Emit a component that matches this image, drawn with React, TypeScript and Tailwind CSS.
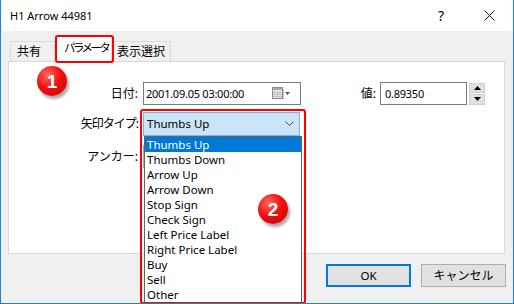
import React from "react";

const items = [
  "Thumbs Up",
  "Thumbs Down",
  "Arrow Up",
  "Arrow Down",
  "Stop Sign",
  "Check Sign",
  "Left Price Label",
  "Right Price Label",
  "Buy",
  "Sell",
  "Other",
];

function Badge({ n, cls }: { n: string; cls: string }) {
  return (
    <div
      className={`absolute w-[30px] h-[30px] rounded-full flex items-center justify-center text-white text-[19px] font-bold leading-none bg-[radial-gradient(circle_at_35%_30%,#ff6a5e_0%,#f01010_45%,#c80000_100%)] shadow-[2px_3px_3px_rgba(0,0,0,0.35)] font-['Liberation_Sans',sans-serif] ${cls}`}
    >
      {n}
    </div>
  );
}

export default function App() {
  return (
    <div className="relative w-[514px] h-[304px] overflow-hidden bg-[#f0f0f0] border-x border-b border-[#1883d7] flex flex-col text-[12px] text-black font-['Noto_Sans','Noto_Sans_CJK_JP',sans-serif]">
      {/* title bar */}
      <div className="h-[31px] shrink-0 bg-white flex items-center pl-[9px]">
        <span className="flex-1 text-[11px] leading-[14px]">H1 Arrow 44981</span>
        <span className="w-[46px] text-center text-[14px] leading-[14px] mr-[2px]">?</span>
        <span className="w-[46px] flex justify-center mr-[1px]">
          <svg width="11" height="11" viewBox="0 0 11 11">
            <path d="M0.5 0.5 L10.5 10.5 M10.5 0.5 L0.5 10.5" stroke="#111" strokeWidth="1" fill="none" />
          </svg>
        </span>
      </div>

      {/* body */}
      <div className="flex-1 flex flex-col pl-[7px] pr-[8px] pt-[5px]">
        {/* tabs */}
        <div className="h-[25px] flex items-end pl-[2px] relative z-10 whitespace-nowrap">
          <div className="w-[45px] h-[20px] border border-b-0 border-[#d9d9d9] bg-[#f0f0f0] flex items-center pl-[6px] leading-[14px]">
            共有
          </div>
          <div className="w-[57px] h-[26px] -mb-px border border-b-0 border-[#d9d9d9] bg-white flex items-center pl-[8px] pb-[3px] leading-[14px] text-[11.5px] tracking-[-2.6px]">
            パラメータ
          </div>
          <div className="w-[59px] h-[20px] border border-b-0 border-l-0 border-[#d9d9d9] bg-[#f0f0f0] flex items-center pl-[5px] leading-[14px]">
            表示選択
          </div>
        </div>

        {/* panel */}
        <div className="w-[497px] h-[193px] bg-white border border-[#d9d9d9] pt-[20px]">
          {/* row 1 */}
          <div className="flex items-center h-[23px]">
            <div className="w-[130px] text-right pr-[1px]">日付:</div>
            <div className="ml-[4px] w-[158px] h-[23px] border border-[#7a7a7a] flex items-center pl-[2px] pr-[8px]">
              <span className="flex-1 text-[11px] leading-[14px] tracking-[-0.25px]">2001.09.05 03:00:00</span>
              <svg width="20" height="13" viewBox="0 0 20 13">
                <rect x="0.5" y="0.5" width="10" height="11" fill="#f4f4f4" stroke="#8a8a8a" />
                <rect x="1" y="1" width="9" height="2" fill="#a8a8a8" />
                <path d="M3 3.5 V11 M5.5 3.5 V11 M8 3.5 V11 M1 5.5 H10 M1 7.5 H10 M1 9.5 H10" stroke="#b8b8b8" strokeWidth="0.8" />
                <path d="M11 12.5 H11.5 V2" stroke="#c8c8c8" fill="none" />
                <path d="M13 5 L18 5 L15.5 8 Z" fill="#4a5a7a" />
              </svg>
            </div>
            <div className="w-[75px] text-right">値:</div>
            <div className="ml-[4px] w-[87px] h-[23px] border border-[#7a7a7a] flex items-center pl-[4px] text-[11px] leading-[14px] tracking-[-0.25px]">
              0.89350
            </div>
            <div className="ml-[2px] w-[16px] h-[22px] flex flex-col gap-[1px]">
              <div className="h-[10px] bg-[#e1e1e1] border border-[#cfcfcf] flex items-center justify-center">
                <svg width="7" height="4" viewBox="0 0 7 4"><path d="M0 4 L3.5 0 L7 4 Z" fill="#000" /></svg>
              </div>
              <div className="h-[11px] bg-[#e1e1e1] border border-[#cfcfcf] flex items-center justify-center">
                <svg width="7" height="4" viewBox="0 0 7 4"><path d="M0 0 L7 0 L3.5 4 Z" fill="#000" /></svg>
              </div>
            </div>
          </div>

          {/* row 2 */}
          <div className="flex items-center h-[23px] mt-[7px]">
            <div className="w-[130px] text-right pr-[1px] tracking-[-1px]">矢印タイプ:</div>
            <div className="ml-[4px] w-[157px] h-[24px] bg-[#cce4f7] border border-[#7eb4ea] flex items-center pl-[3px] pr-[5px]">
              <span className="flex-1 text-[11.5px] leading-[14px]">Thumbs Up</span>
              <svg width="9" height="6" viewBox="0 0 9 6">
                <path d="M0.5 0.5 L4.5 4.5 L8.5 0.5" stroke="#444" fill="none" />
              </svg>
            </div>
          </div>

          {/* row 3 */}
          <div className="flex items-center h-[23px] mt-[10px]">
            <div className="w-[130px] text-right pr-[1px]">アンカー:</div>
            <div className="ml-[4px] w-[158px] h-[23px] border border-[#adadad] bg-[#e1e1e1]" />
          </div>
        </div>

        {/* buttons */}
        <div className="flex justify-end gap-[10px] mt-[10px]">
          <button className="w-[85px] h-[23px] bg-[#e1e1e1] border-2 border-[#0078d7] flex items-center justify-center text-[11.5px] leading-[14px]">
            OK
          </button>
          <button className="w-[85px] h-[23px] bg-[#e1e1e1] border border-[#adadad] flex items-center justify-center leading-[14px] mr-[-1px]">
            キャンセル
          </button>
        </div>
      </div>

      {/* dropdown list popup */}
      <div className="absolute left-[143px] top-[136px] w-[158px] h-[170px] bg-white border border-[#646464] z-20">
        {items.map((t, i) => (
          <div
            key={t}
            className={`h-[15px] pl-[2px] text-[11.5px] leading-[15px] whitespace-nowrap ${i === 0 ? "bg-[#0078d7] text-white" : ""}`}
          >
            {t}
          </div>
        ))}
      </div>

      {/* red highlight boxes */}
      <div className="absolute left-[54px] top-[35px] w-[59px] h-[28px] border-2 border-[#ff0000] rounded-[3px] z-30" />
      <div className="absolute left-[139px] top-[109px] w-[166px] h-[195px] border-2 border-[#ff0000] rounded-[3px] z-30" />

      {/* badges */}
      <Badge n="1" cls="left-[36px] top-[66px] z-30" />
      <Badge n="2" cls="left-[257px] top-[194px] z-30" />
    </div>
  );
}
